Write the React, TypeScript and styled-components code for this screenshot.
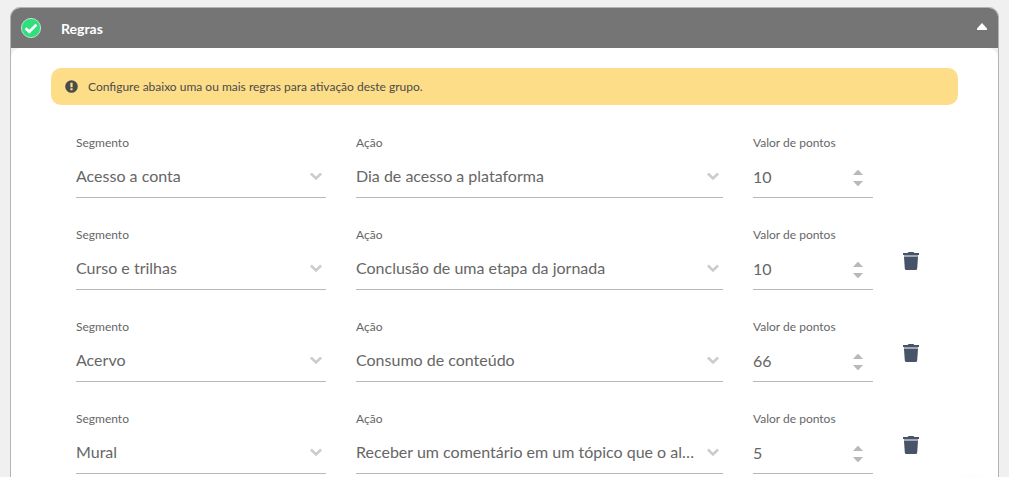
import React, { useId, useState } from "react";
import styled, { createGlobalStyle } from "styled-components";

const GlobalStyle = createGlobalStyle`
  * { box-sizing: border-box; }
  body {
    margin: 0;
    background: #f0f0f0;
    font-family: Lato, "Liberation Sans", sans-serif;
    color: #666;
  }
  button { margin: 0; padding: 0; border: 0; background: none; cursor: pointer; }
  svg { display: block; }
`;

const Page = styled.main`
  height: 100vh;
  overflow: hidden;
  padding: 7px 10px 0;
`;

const Panel = styled.section`
  min-height: 100vh;
  border: 1px solid #b4b4b4;
  border-radius: 10px;
  overflow: hidden;
  background: #f0f0f0;
`;

const PanelHeader = styled.header`
  display: flex;
  align-items: center;
  height: 40px;
  padding: 0 10px;
  background: #757575;
`;

const PanelTitle = styled.h2`
  flex: 1;
  margin: 0 0 0 20px;
  padding-top: 2px;
  font-size: 14px;
  line-height: 20px;
  font-weight: 700;
  color: #fff;
`;

const CollapseButton = styled.button`
  padding: 0 1px 4px;
`;

const PanelBody = styled.div`
  min-height: 100vh;
  padding: 20px 40px;
  border-radius: 10px 10px 0 0;
  background: #fff;
`;

const Notice = styled.p`
  display: flex;
  align-items: center;
  gap: 10px;
  min-height: 37px;
  margin: 0 0 30px;
  padding: 0 14px;
  border-radius: 10px;
  background: #fddd87;
  color: #4b4b4b;
  font-size: 12px;
  line-height: 16px;
`;

const RuleList = styled.form`
  display: flex;
  flex-direction: column;
  gap: 29px;
  padding: 0 25px;
`;

const RuleRow = styled.div`
  display: grid;
  grid-template-columns: 250px minmax(0, 1fr) 120px 30px;
  column-gap: 30px;
`;

const Field = styled.div`
  display: flex;
  flex-direction: column;
`;

const Label = styled.label`
  font-size: 12px;
  line-height: 16px;
`;

const Control = styled.div`
  display: grid;
  align-items: center;
  height: 47px;
  padding-top: 4px;
  border-bottom: 1px solid #b8b8b8;

  > * { grid-area: 1 / 1; }
`;

const Select = styled.select`
  appearance: none;
  width: 100%;
  min-width: 0;
  height: 24px;
  margin: 0;
  padding: 0 26px 0 0;
  border: 0;
  outline: 0;
  background: transparent;
  color: inherit;
  font: 400 16px/24px Lato, "Liberation Sans", sans-serif;
  text-overflow: ellipsis;
  white-space: nowrap;
  overflow: hidden;
`;

const SelectArrow = styled.svg`
  justify-self: end;
  margin-right: 4px;
  pointer-events: none;
`;

const NumberInput = styled.input`
  appearance: textfield;
  width: 100%;
  height: 24px;
  margin: 2px 0 0;
  padding: 0 30px 0 0;
  border: 0;
  outline: 0;
  background: transparent;
  color: inherit;
  font: 400 16px/24px Lato, "Liberation Sans", sans-serif;

  &::-webkit-inner-spin-button,
  &::-webkit-outer-spin-button {
    appearance: none;
    margin: 0;
  }
`;

const Stepper = styled.div`
  justify-self: end;
  display: flex;
  flex-direction: column;
  gap: 6px;
  margin: 3px 10px 0 0;
`;

const DeleteButton = styled.button`
  align-self: start;
  justify-self: start;
  margin-top: 25px;
`;

/* Round widget parked below the fold; only the top of its shadow shows. */
const FloatingWidget = styled.div`
  position: fixed;
  right: 6px;
  bottom: -66px;
  width: 60px;
  height: 60px;
  border-radius: 50%;
  background: #fff;
  box-shadow: 0 1px 12px rgba(0, 0, 0, 0.2);
`;

const CheckBadge = () => (
  <svg width="20" height="20" viewBox="0 0 20 20" aria-hidden="true">
    <circle cx="10" cy="10" r="9.6" fill="#2fdf7d" stroke="#d5f3e1" strokeWidth="0.8" />
    <path d="M4.6 10.2 8.3 13.8 15.4 6.6" fill="none" stroke="#fff" strokeWidth="2.7" />
  </svg>
);

const AlertIcon = () => (
  <svg width="13" height="13" viewBox="0 0 13 13" aria-hidden="true">
    <circle cx="6.5" cy="6.5" r="6.3" fill="#4b4b4b" />
    <path d="M5.4 2.8h2.2v4.4H5.4zM5.4 8.2h2.2v2H5.4z" fill="#fddd87" />
  </svg>
);

const Triangle = ({ down = false }: { down?: boolean }) => (
  <svg width="10" height="5" viewBox="0 0 10 5" aria-hidden="true">
    <path d={down ? "M0 0h10L5.6 4.7q-.6.5-1.2 0z" : "M0 5h10L5.6.3q-.6-.5-1.2 0z"} fill="#b8b8b8" />
  </svg>
);

const TrashIcon = () => (
  <svg width="16" height="18" viewBox="0 0 16 18" aria-hidden="true">
    <path d="M0 1h4.6L5.6 0h4.8l1 1H16v2H0z" fill="#465369" />
    <path d="M1 3h14v2H1z" fill="#a3a9b4" />
    <path d="M1 5h14l-.8 11.5q-.1 1.5-1.6 1.5H3.4q-1.5 0-1.6-1.5z" fill="#465369" />
  </svg>
);

function SelectField({ label, value }: { label: string; value: string }) {
  const id = useId();
  return (
    <Field>
      <Label htmlFor={id}>{label}</Label>
      <Control>
        <Select id={id} defaultValue={value}>
          <option value={value}>{value}</option>
        </Select>
        <SelectArrow width="12" height="8" viewBox="0 0 12 8" aria-hidden="true">
          <path d="M.9 1.5 6 6.4l5.1-4.9" fill="none" stroke="#ccc" strokeWidth="2.6" />
        </SelectArrow>
      </Control>
    </Field>
  );
}

function PointsField({ initial }: { initial: number }) {
  const id = useId();
  const [points, setPoints] = useState(initial);
  return (
    <Field>
      <Label htmlFor={id}>Valor de pontos</Label>
      <Control>
        <NumberInput
          id={id}
          type="number"
          value={points}
          onChange={(e) => setPoints(Number(e.target.value))}
        />
        <Stepper>
          <button type="button" aria-label="Aumentar" onClick={() => setPoints(points + 1)}>
            <Triangle />
          </button>
          <button type="button" aria-label="Diminuir" onClick={() => setPoints(points - 1)}>
            <Triangle down />
          </button>
        </Stepper>
      </Control>
    </Field>
  );
}

const initialRules = [
  { segment: "Acesso a conta", action: "Dia de acesso a plataforma", points: 10 },
  { segment: "Curso e trilhas", action: "Conclusão de uma etapa da jornada", points: 10 },
  { segment: "Acervo", action: "Consumo de conteúdo", points: 66 },
  { segment: "Mural", action: "Receber um comentário em um tópico que o aluno criou", points: 5 },
];

export default function App() {
  const [rules, setRules] = useState(initialRules);
  const [open, setOpen] = useState(true);

  return (
    <Page>
      <GlobalStyle />
      <Panel>
        <PanelHeader>
          <CheckBadge />
          <PanelTitle>Regras</PanelTitle>
          <CollapseButton
            type="button"
            aria-label="Recolher"
            aria-expanded={open}
            onClick={() => setOpen(!open)}
          >
            <svg width="10" height="7" viewBox="0 0 10 7" aria-hidden="true">
              <path d="M0 7V5.5L5 0l5 5.5V7z" fill="#fff" />
            </svg>
          </CollapseButton>
        </PanelHeader>
        {open && (
          <PanelBody>
            <Notice>
              <AlertIcon />
              Configure abaixo uma ou mais regras para ativação deste grupo.
            </Notice>
            <RuleList>
              {rules.map((rule, index) => (
                <RuleRow key={rule.segment}>
                  <SelectField label="Segmento" value={rule.segment} />
                  <SelectField label="Ação" value={rule.action} />
                  <PointsField initial={rule.points} />
                  {index > 0 && (
                    <DeleteButton
                      type="button"
                      aria-label="Excluir regra"
                      onClick={() => setRules(rules.filter((r) => r !== rule))}
                    >
                      <TrashIcon />
                    </DeleteButton>
                  )}
                </RuleRow>
              ))}
            </RuleList>
          </PanelBody>
        )}
      </Panel>
      <FloatingWidget aria-hidden="true" />
    </Page>
  );
}
